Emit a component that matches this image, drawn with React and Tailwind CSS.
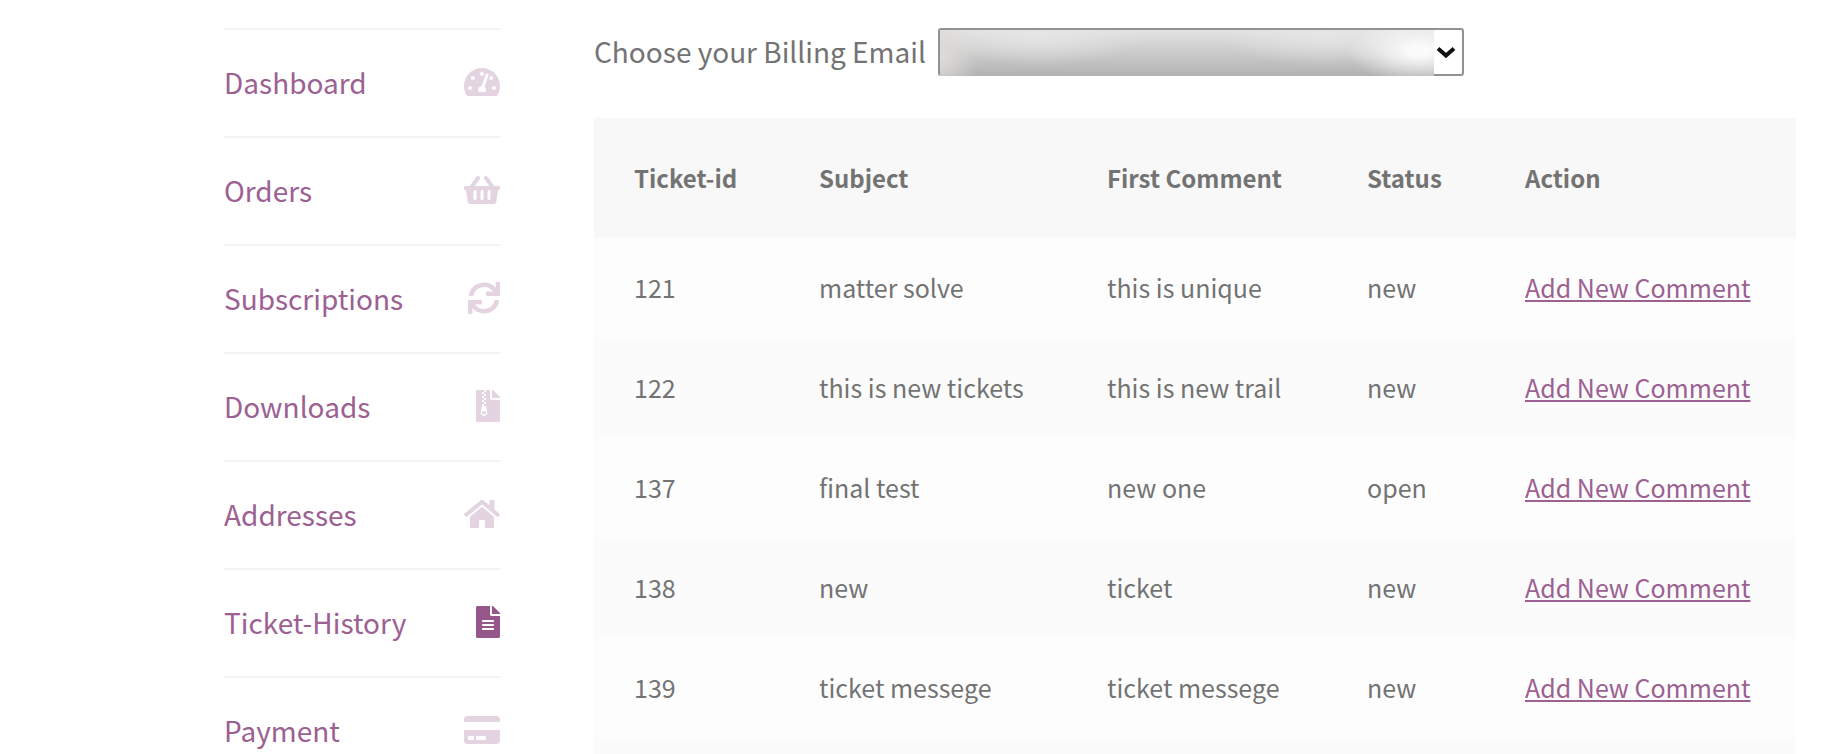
import {
  FaTachometerAlt,
  FaShoppingBasket,
  FaSync,
  FaFileArchive,
  FaHome,
  FaFileAlt,
  FaCreditCard,
} from "react-icons/fa";

const links = [
  { label: "Dashboard", Icon: FaTachometerAlt, size: "h-8 w-9" },
  { label: "Orders", Icon: FaShoppingBasket, size: "h-8 w-9" },
  { label: "Subscriptions", Icon: FaSync, size: "h-8 w-8" },
  { label: "Downloads", Icon: FaFileArchive, size: "h-8 w-6" },
  { label: "Addresses", Icon: FaHome, size: "h-8 w-9" },
  { label: "Ticket-History", Icon: FaFileAlt, size: "h-8 w-6", active: true },
  { label: "Payment", Icon: FaCreditCard, size: "h-8 w-9" },
];

const tickets = [
  { id: 121, subject: "matter solve", comment: "this is unique", status: "new" },
  { id: 122, subject: "this is new tickets", comment: "this is new trail", status: "new" },
  { id: 137, subject: "final test", comment: "new one", status: "open" },
  { id: 138, subject: "new", comment: "ticket", status: "new" },
  { id: 139, subject: "ticket messege", comment: "ticket messege", status: "new" },
];

function Sidebar() {
  return (
    <nav aria-label="Account" className="w-[276px] shrink-0">
      <ul className="border-t-2 border-[#f3f3f3]">
        {links.map(({ label, Icon, size, active }) => (
          <li key={label} className="border-b-2 border-[#f3f3f3]">
            <a
              href="#"
              aria-current={active ? "page" : undefined}
              className="flex h-[106px] items-center justify-between pb-[2px] text-[28px] text-[#9c6092]"
            >
              <span>{label}</span>
              <Icon
                aria-hidden="true"
                className={`${size} text-[#96588a] ${active ? "" : "opacity-25"}`}
              />
            </a>
          </li>
        ))}
      </ul>
    </nav>
  );
}

function EmailPicker() {
  return (
    <div className="flex items-center gap-3">
      <label htmlFor="billing-email" className="pb-[2px] text-[28px] leading-[46px]">
        Choose your Billing Email
      </label>
      <div className="relative w-[526px]">
        <select
          id="billing-email"
          className="block h-12 w-full appearance-none rounded-[3px] border-2 border-[#929292] bg-white"
        />
        <span className="pointer-events-none absolute top-[2px] bottom-0 left-[2px] right-[30px] bg-[radial-gradient(72px_32px_at_97%_45%,#fbfbfb_15%,transparent),radial-gradient(40px_50px_at_0%_55%,#dedcd9,transparent),radial-gradient(110px_36px_at_20%_0%,#e6e6e6,transparent),radial-gradient(110px_36px_at_78%_0%,#e6e6e6,transparent),linear-gradient(to_bottom,#e2e2e2,#c8c8c8_55%,#b2b2b2)]" />
        <svg
          aria-hidden="true"
          viewBox="0 0 20 14"
          className="pointer-events-none absolute top-[18px] right-2 h-[14px] w-5"
        >
          <path d="M2 2.500 L10 9.500 L18 2.500" fill="none" stroke="#111" strokeWidth="4" />
        </svg>
      </div>
    </div>
  );
}

function TicketTable() {
  return (
    <table className="mt-[42px] w-full table-fixed text-left text-[25px] leading-[36px]">
      <colgroup>
        <col className="w-[185px]" />
        <col className="w-[288px]" />
        <col className="w-[260px]" />
        <col className="w-[158px]" />
        <col />
      </colgroup>
      <thead className="bg-[#f8f8f8]">
        <tr className="h-[120px]">
          {["Ticket-id", "Subject", "First Comment", "Status", "Action"].map((title) => (
            <th
              key={title}
              scope="col"
              className="pl-10 text-[24px] font-semibold whitespace-nowrap"
            >
              {title}
            </th>
          ))}
        </tr>
      </thead>
      <tbody>
        {tickets.map((t) => (
          <tr key={t.id} className="h-[100px] bg-[#fdfdfd] even:bg-[#fbfbfb]">
            <td className="pb-[2px] pl-10">{t.id}</td>
            <td className="pb-[2px] pl-10">{t.subject}</td>
            <td className="pb-[2px] pl-10">{t.comment}</td>
            <td className="pb-[2px] pl-10">{t.status}</td>
            <td className="pb-[2px] pl-10 whitespace-nowrap">
              <a href="#" className="text-[#9c6092] underline decoration-2 underline-offset-2">
                Add New Comment
              </a>
            </td>
          </tr>
        ))}
        <tr className="h-[100px] bg-[#fbfbfb]">
          <td colSpan={5} />
        </tr>
      </tbody>
    </table>
  );
}

export default function App() {
  return (
    <div className="h-screen overflow-hidden bg-white font-['Noto_Sans_CJK_JP',sans-serif] text-[#737373]">
      <div className="flex gap-[94px] pt-7 pr-11 pl-56">
        <Sidebar />
        <main className="min-w-0 flex-1">
          <EmailPicker />
          <TicketTable />
        </main>
      </div>
    </div>
  );
}
